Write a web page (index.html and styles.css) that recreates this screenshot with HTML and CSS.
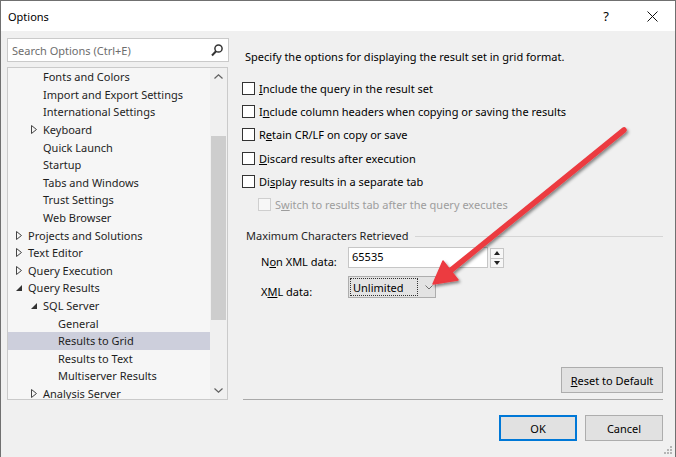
FILE: index.html
```html
<!DOCTYPE html>
<html lang="en">
<head>
    <meta charset="UTF-8">
    <title>Options</title>
    <link rel="stylesheet" href="styles.css">
</head>
<body>

<div class="window">
    <div class="titlebar">
        <span class="title">Options</span>
        <span class="caption-btn help">?</span>
        <span class="caption-btn">
            <svg width="11" height="11" viewBox="0 0 11 11"><path d="M0.5 0.5 L10.5 10.5 M10.5 0.5 L0.5 10.5" stroke="#111" stroke-width="1"/></svg>
        </span>
    </div>

    <div class="main">
        <div class="nav">
            <div class="search">
                <span>Search Options (Ctrl+E)</span>
                <svg class="search-icon" width="12" height="13" viewBox="0 0 12 13"><circle cx="7.5" cy="4.5" r="3.6" fill="none" stroke="#333" stroke-width="1.5"/><path d="M5 7.3 L1 11.5" stroke="#333" stroke-width="2"/></svg>
            </div>
            <div class="tree">
                <ul class="tree-list">
                    <li class="lvl1"><span class="toggle"></span>Fonts and Colors</li>
                    <li class="lvl1"><span class="toggle"></span>Import and Export Settings</li>
                    <li class="lvl1"><span class="toggle"></span>International Settings</li>
                    <li class="lvl1"><span class="toggle"><svg width="6" height="9"><path d="M0.5 0.5 L5.5 4.5 L0.5 8.5 Z" fill="none" stroke="#444"/></svg></span>Keyboard</li>
                    <li class="lvl1"><span class="toggle"></span>Quick Launch</li>
                    <li class="lvl1"><span class="toggle"></span>Startup</li>
                    <li class="lvl1"><span class="toggle"></span>Tabs and Windows</li>
                    <li class="lvl1"><span class="toggle"></span>Trust Settings</li>
                    <li class="lvl1"><span class="toggle"></span>Web Browser</li>
                    <li class="lvl0"><span class="toggle"><svg width="6" height="9"><path d="M0.5 0.5 L5.5 4.5 L0.5 8.5 Z" fill="none" stroke="#444"/></svg></span>Projects and Solutions</li>
                    <li class="lvl0"><span class="toggle"><svg width="6" height="9"><path d="M0.5 0.5 L5.5 4.5 L0.5 8.5 Z" fill="none" stroke="#444"/></svg></span>Text Editor</li>
                    <li class="lvl0"><span class="toggle"><svg width="6" height="9"><path d="M0.5 0.5 L5.5 4.5 L0.5 8.5 Z" fill="none" stroke="#444"/></svg></span>Query Execution</li>
                    <li class="lvl0"><span class="toggle"><svg width="6" height="6"><path d="M6 0 L6 6 L0 6 Z" fill="#333"/></svg></span>Query Results</li>
                    <li class="lvl1"><span class="toggle"><svg width="6" height="6"><path d="M6 0 L6 6 L0 6 Z" fill="#333"/></svg></span>SQL Server</li>
                    <li class="lvl2"><span class="toggle"></span>General</li>
                    <li class="lvl2 selected"><span class="toggle"></span>Results to Grid</li>
                    <li class="lvl2"><span class="toggle"></span>Results to Text</li>
                    <li class="lvl2"><span class="toggle"></span>Multiserver Results</li>
                    <li class="lvl1"><span class="toggle"><svg width="6" height="9"><path d="M0.5 0.5 L5.5 4.5 L0.5 8.5 Z" fill="none" stroke="#444"/></svg></span>Analysis Server</li>
                </ul>
                <div class="scrollbar">
                    <div class="sb-arrow"><svg width="9" height="5"><path d="M0.5 4.5 L4.5 0.8 L8.5 4.5" fill="none" stroke="#606060" stroke-width="1.2"/></svg></div>
                    <div class="sb-track"><div class="sb-thumb"></div></div>
                    <div class="sb-arrow"><svg width="9" height="5"><path d="M0.5 0.5 L4.5 4.2 L8.5 0.5" fill="none" stroke="#606060" stroke-width="1.2"/></svg></div>
                </div>
            </div>
        </div>

        <div class="panel">
            <p class="desc">Specify the options for displaying the result set in grid format.</p>

            <div class="checks">
                <div class="check"><span class="box"></span><span><u>I</u>nclude the query in the result set</span></div>
                <div class="check"><span class="box"></span><span>I<u>n</u>clude column headers when copying or saving the results</span></div>
                <div class="check"><span class="box"></span><span>R<u>e</u>tain CR/LF on copy or save</span></div>
                <div class="check"><span class="box"></span><span><u>D</u>iscard results after execution</span></div>
                <div class="check"><span class="box"></span><span>Di<u>s</u>play results in a separate tab</span></div>
                <div class="check disabled"><span class="box"></span><span>S<u>w</u>itch to results tab after the query executes</span></div>
            </div>

            <div class="group">
                <div class="group-head"><span>Maximum Characters Retrieved</span><span class="rule"></span></div>
                <div class="field-row">
                    <span class="field-label">N<u>o</u>n XML data:</span>
                    <div class="text-input">65535</div>
                    <div class="spinner">
                        <span class="spin"><svg width="6" height="4"><path d="M0 4 L3 0 L6 4 Z" fill="#222"/></svg></span>
                        <span class="spin"><svg width="6" height="4"><path d="M0 0 L3 4 L6 0 Z" fill="#222"/></svg></span>
                    </div>
                </div>
                <div class="field-row second">
                    <span class="field-label">X<u>M</u>L data:</span>
                    <div class="combo">
                        <span class="combo-value">Unlimited</span>
                        <svg class="chevron" width="8" height="5"><path d="M0.5 0.5 L4 4 L7.5 0.5" fill="none" stroke="#707070"/></svg>
                    </div>
                </div>
            </div>

            <div class="reset-row"><button class="btn reset"><u>R</u>eset to Default</button></div>
            <div class="separator"></div>
        </div>
    </div>

    <div class="footer">
        <button class="btn ok">OK</button>
        <button class="btn">Cancel</button>
    </div>

    <svg class="grip" width="10" height="10">
        <rect x="7" y="1" width="2" height="2" fill="#b5b5b5"/>
        <rect x="4" y="4" width="2" height="2" fill="#b5b5b5"/>
        <rect x="7" y="4" width="2" height="2" fill="#b5b5b5"/>
        <rect x="1" y="7" width="2" height="2" fill="#b5b5b5"/>
        <rect x="4" y="7" width="2" height="2" fill="#b5b5b5"/>
        <rect x="7" y="7" width="2" height="2" fill="#b5b5b5"/>
    </svg>

    <!-- callout arrow drawn over the dialog -->
    <svg class="callout" width="676" height="457" viewBox="0 0 676 457">
        <defs>
            <filter id="shadow" x="-20%" y="-20%" width="140%" height="140%">
                <feDropShadow dx="1.5" dy="2" stdDeviation="1.5" flood-color="#000" flood-opacity="0.45"/>
            </filter>
        </defs>
        <g filter="url(#shadow)">
            <path d="M624 130 L450 271" stroke="#ec3a40" stroke-width="5.5" stroke-linecap="round"/>
            <path d="M433 284 L443 261 L458 280 Z" fill="#ec3a40" stroke="#ec3a40" stroke-width="1.5" stroke-linejoin="round"/>
        </g>
    </svg>
</div>

</body>
</html>
```

FILE: styles.css
```css
* {
    box-sizing: border-box;
}
body {
    margin: 0;
    font-family: "Noto Sans", sans-serif;
    font-size: 11px;
    color: #000;
}
.window {
    position: relative;
    width: 676px;
    height: 457px;
    background-color: #f0f0f0;
    border: 1px solid #707070;
    border-bottom: none;
    overflow: hidden;
}
.titlebar {
    display: flex;
    align-items: center;
    height: 30px;
    background-color: #fff;
}
.title {
    flex: 1;
    padding-left: 7px;
}
.caption-btn {
    display: flex;
    align-items: center;
    justify-content: center;
    width: 46px;
    height: 30px;
}
.help {
    font-size: 13px;
}
.main {
    display: flex;
    gap: 14px;
    height: 369px;
    padding: 7px 12px 0 6px;
}
.nav {
    display: flex;
    flex-direction: column;
    gap: 5px;
    width: 222px;
}
.search {
    display: flex;
    align-items: center;
    justify-content: space-between;
    height: 24px;
    padding: 0 5px 0 4px;
    background-color: #fff;
    border: 1px solid #cacaca;
    color: #6d6d6d;
}
.tree {
    display: flex;
    flex: 1;
    width: 221px;
    background-color: #f6f6f6;
    border: 1px solid #cacaca;
    overflow: hidden;
}
.tree-list {
    flex: 1;
    margin: 0;
    padding: 0;
    list-style: none;
    overflow: hidden;
    color: #1e1e1e;
}
.tree-list li {
    display: flex;
    align-items: center;
    height: 17.6px;
    white-space: nowrap;
}
.tree-list li.selected {
    background-color: #cdcfdc;
}
.toggle {
    display: flex;
    align-items: center;
    width: 12px;
    height: 10px;
}
.lvl0 {
    padding-left: 8px;
}
.lvl1 {
    padding-left: 23px;
}
.lvl2 {
    padding-left: 38px;
}
.scrollbar {
    display: flex;
    flex-direction: column;
    width: 17px;
    background-color: #f0f0f0;
}
.sb-arrow {
    display: flex;
    align-items: center;
    justify-content: center;
    height: 17px;
}
.sb-track {
    flex: 1;
    padding: 0 1px;
}
.sb-thumb {
    height: 184px;
    margin-top: 51px;
    background-color: #cdcdcd;
}
.panel {
    display: flex;
    flex-direction: column;
    flex: 1;
}
.desc {
    margin: 11px 0 0 2px;
    line-height: 16px;
}
.checks {
    margin-top: 12px;
}
.check {
    display: flex;
    align-items: center;
    height: 23.2px;
}
.box {
    width: 13px;
    height: 13px;
    margin: 0 4px 0 -1px;
    background-color: #fff;
    border: 1px solid #333;
}
.check.disabled {
    padding-left: 16px;
    color: #9d9d9d;
}
.check.disabled .box {
    border-color: #cfcfcf;
    background-color: #f7f7f7;
}
.group {
    margin-top: 12px;
}
.group-head {
    display: flex;
    align-items: center;
    padding-left: 3px;
    line-height: 16px;
    color: #1e1e1e;
}
.rule {
    flex: 1;
    margin-left: 6px;
    border-top: 1px solid #d5d5d5;
}
.field-row {
    display: flex;
    align-items: flex-start;
    margin-top: 3px;
    padding-left: 18px;
}
.field-row.second {
    margin-top: 6px;
}
.field-label {
    width: 87px;
    margin-top: 7px;
    line-height: 16px;
}
.field-row.second .field-label {
    margin-top: 8px;
}
.text-input {
    width: 140px;
    height: 21px;
    padding: 1px 3px;
    line-height: 16px;
    background-color: #fff;
    border: 1px solid #c6c6c6;
}
.spinner {
    display: flex;
    flex-direction: column;
    width: 14px;
    height: 20px;
    margin: 1px 0 0 2px;
    border: 1px solid #c6c6c6;
    background-color: #f7f7f7;
}
.spin {
    display: flex;
    align-items: center;
    justify-content: center;
    flex: 1;
}
.spin + .spin {
    border-top: 1px solid #c6c6c6;
}
.combo {
    display: flex;
    align-items: center;
    width: 88px;
    height: 22px;
    padding: 1px;
    background-color: #e3e3e3;
    border: 1px solid #adadad;
}
.combo-value {
    width: 68px;
    height: 100%;
    padding-left: 2px;
    line-height: 18px;
    border: 1px dotted #333;
}
.chevron {
    margin-left: 7px;
}
.reset-row {
    display: flex;
    justify-content: flex-end;
    margin-top: auto;
}
.btn {
    height: 26px;
    padding: 0;
    font: inherit;
    color: #000;
    background-color: #e1e1e1;
    border: 1px solid #adadad;
}
.reset {
    width: 102px;
}
.separator {
    height: 1px;
    margin-top: 6px;
    background-color: #a9a9a9;
}
.footer {
    display: flex;
    justify-content: flex-end;
    gap: 8px;
    padding: 15px 12px 0 0;
}
.footer .btn {
    width: 78px;
}
.btn.ok {
    border: 2px solid #0078d7;
}
.grip {
    position: absolute;
    right: 2px;
    bottom: 2px;
}
.callout {
    position: absolute;
    left: -1px;
    top: -1px;
    pointer-events: none;
}
```
